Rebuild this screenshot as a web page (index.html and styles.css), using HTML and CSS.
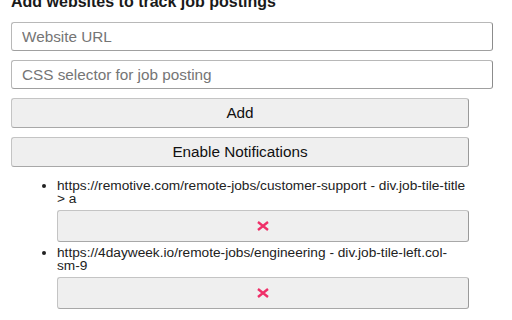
FILE: index.html
```html
<!DOCTYPE html>
<html>
<head>
<meta charset="utf-8">
<link rel="stylesheet" href="styles.css">
</head>
<body>
<div class="panel">
  <h2 class="title">Add websites to track job postings</h2>
  <input class="field" type="text" placeholder="Website URL">
  <input class="field" type="text" placeholder="CSS selector for job posting">
  <button class="btn">Add</button>
  <button class="btn">Enable Notifications</button>
  <ul class="sites">
    <li class="site">
      <span class="site-text">https://remotive.com/remote-jobs/customer-support - div.job-tile-title &gt; a</span>
      <button class="btn del"><svg width="14" height="10" viewBox="0 0 14 10"><path d="M2 1 L12 9 M12 1 L2 9" stroke="#ef2f68" stroke-width="2.4" stroke-linecap="butt" fill="none"/></svg></button>
    </li>
    <li class="site">
      <span class="site-text">https://4dayweek.io/remote-jobs/engineering - div.job-tile-left.col-sm-9</span>
      <button class="btn del"><svg width="14" height="10" viewBox="0 0 14 10"><path d="M2 1 L12 9 M12 1 L2 9" stroke="#ef2f68" stroke-width="2.4" stroke-linecap="butt" fill="none"/></svg></button>
    </li>
  </ul>
</div>
</body>
</html>
```
FILE: styles.css
```css
html, body {
  margin: 0;
  padding: 0;
  background: #ffffff;
  overflow: hidden;
}
body {
  font-family: "Liberation Sans", Arial, sans-serif;
  color: #222;
}
.panel {
  width: 458px;
  margin-left: 11px;
  display: flex;
  flex-direction: column;
}
.title {
  font-size: 16px;
  line-height: 20px;
  font-weight: bold;
  margin: -8px 0 10px 0;
  color: #1a1a1a;
}
.field {
  width: 458px;
  height: 27px;
  box-sizing: content-box;
  padding: 0 12px 0 10px;
  margin: 0 0 9px 0;
  border: 1px solid #b8b8b8;
  border-right-color: #8c8c8c;
  border-bottom-color: #a0a0a0;
  border-radius: 3px;
  font-family: "Liberation Sans", Arial, sans-serif;
  font-size: 15.3px;
  color: #333;
  background: #fff;
}
.field::placeholder {
  color: #757575;
}
.btn {
  width: 100%;
  height: 30px;
  margin: 0 0 9px 0;
  background: #efefef;
  border: 1px solid #c4c4c4;
  border-right-color: #9a9a9a;
  border-bottom-color: #a8a8a8;
  border-radius: 3px;
  font-family: "Liberation Sans", Arial, sans-serif;
  font-size: 15.3px;
  color: #111;
  display: flex;
  align-items: center;
  justify-content: center;
  padding: 0;
}
.sites {
  margin: 3px 0 0 0;
  padding: 0 0 0 46px;
  font-size: 13.7px;
  line-height: 13px;
  color: #222;
}
.site {
  margin: 0;
}
.site-text {
  display: block;
  padding-top: 0;
}
.btn.del {
  height: 32px;
  margin: 5px 0 4px 0;
}
```
